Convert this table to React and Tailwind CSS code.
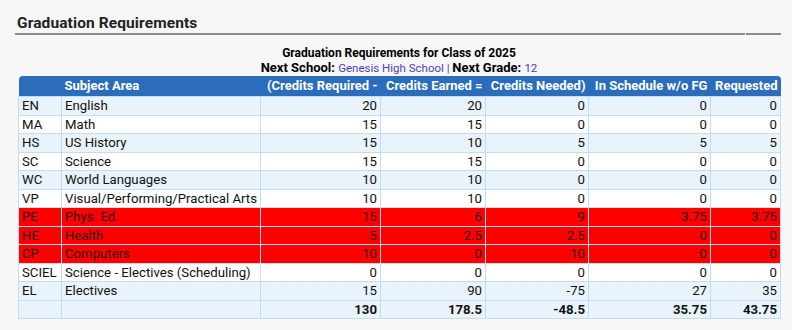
import React from 'react';

const rows = [
    { code: 'EN', name: 'English', req: '20', earned: '20', needed: '0', sched: '0', requested: '0' },
    { code: 'MA', name: 'Math', req: '15', earned: '15', needed: '0', sched: '0', requested: '0' },
    { code: 'HS', name: 'US History', req: '15', earned: '10', needed: '5', sched: '5', requested: '5' },
    { code: 'SC', name: 'Science', req: '15', earned: '15', needed: '0', sched: '0', requested: '0' },
    { code: 'WC', name: 'World Languages', req: '10', earned: '10', needed: '0', sched: '0', requested: '0' },
    { code: 'VP', name: 'Visual/Performing/Practical Arts', req: '10', earned: '10', needed: '0', sched: '0', requested: '0' },
    { code: 'PE', name: 'Phys. Ed.', req: '15', earned: '6', needed: '9', sched: '3.75', requested: '3.75', short: true },
    { code: 'HE', name: 'Health', req: '5', earned: '2.5', needed: '2.5', sched: '0', requested: '0', short: true },
    { code: 'CP', name: 'Computers', req: '10', earned: '0', needed: '10', sched: '0', requested: '0', short: true },
    { code: 'SCIEL', name: 'Science - Electives (Scheduling)', req: '0', earned: '0', needed: '0', sched: '0', requested: '0' },
    { code: 'EL', name: 'Electives', req: '15', earned: '90', needed: '-75', sched: '27', requested: '35' },
];

const cell = 'border border-[#c3dcf3] px-[3px] h-[18.5px] leading-none';

export default function App() {
    return (
        <div className="w-[792px] h-[330px] bg-[#f7f7f7] text-[#111] overflow-hidden" style={{ fontFamily: 'Roboto, "Liberation Sans", sans-serif' }}>
            <div className="pl-[15px] pt-[14px]">
                <h2 className="pl-[2px] text-[15.5px] font-bold text-[#222] leading-[18px] tracking-[0.1px]">Graduation Requirements</h2>
                <div className="flex mt-[1px]">
                    <div className="w-[730px] border-b-2 border-[#8c8c8c]" />
                    <div className="w-[35px] ml-px border-b-2 border-[#8c8c8c]" />
                </div>
            </div>

            <div className="ml-[18px] w-[762px] mt-[12px]">
                <div className="text-center leading-none">
                    <div className="text-[12px] font-bold text-black">Graduation Requirements for Class of 2025</div>
                    <div className="mt-[2px] text-[13px] text-black">
                        <span className="font-bold">Next School: </span>
                        <span className="text-[11.5px] text-[#4f3fb5]">Genesis High School</span>
                        <span className="text-[11.5px] text-[#4f3fb5]"> | </span>
                        <span className="font-bold">Next Grade: </span>
                        <span className="text-[11.5px] text-[#4f3fb5]">12</span>
                    </div>
                </div>

                <table className="mt-[1px] w-[762px] border-collapse table-fixed text-[13.2px]">
                    <colgroup>
                        <col className="w-[43px]" />
                        <col className="w-[199px]" />
                        <col className="w-[120px]" />
                        <col className="w-[105px]" />
                        <col className="w-[103px]" />
                        <col className="w-[122px]" />
                        <col className="w-[70px]" />
                    </colgroup>
                    <thead>
                        <tr className="bg-[#2c6dbb] text-white text-[13px] font-bold h-[21px]">
                            <th className="rounded-tl-[4px]"></th>
                            <th className="text-left px-[3px]">Subject Area</th>
                            <th className="text-right px-[3px] whitespace-nowrap">(Credits Required -</th>
                            <th className="text-right px-[3px] whitespace-nowrap">Credits Earned =</th>
                            <th className="text-right px-[3px] whitespace-nowrap">Credits Needed)</th>
                            <th className="text-right px-[3px] whitespace-nowrap">In Schedule w/o FG</th>
                            <th className="text-right px-[3px] whitespace-nowrap rounded-tr-[4px]">Requested</th>
                        </tr>
                    </thead>
                    <tbody>
                        {rows.map((r, i) => {
                            const bg = r.short ? 'bg-[#ff0000] text-[#300000]' : i % 2 === 0 ? 'bg-[#e9f3fb]' : 'bg-white';
                            return (
                                <tr key={r.code} className={bg}>
                                    <td className={cell}>{r.code}</td>
                                    <td className={`${cell} whitespace-nowrap`}>{r.name}</td>
                                    <td className={`${cell} text-right`}>{r.req}</td>
                                    <td className={`${cell} text-right`}>{r.earned}</td>
                                    <td className={`${cell} text-right`}>{r.needed}</td>
                                    <td className={`${cell} text-right`}>{r.sched}</td>
                                    <td className={`${cell} text-right`}>{r.requested}</td>
                                </tr>
                            );
                        })}
                        <tr className="bg-[#e9f3fb] font-bold">
                            <td className={cell}></td>
                            <td className={cell}></td>
                            <td className={`${cell} text-right`}>130</td>
                            <td className={`${cell} text-right`}>178.5</td>
                            <td className={`${cell} text-right`}>-48.5</td>
                            <td className={`${cell} text-right`}>35.75</td>
                            <td className={`${cell} text-right`}>43.75</td>
                        </tr>
                    </tbody>
                </table>
            </div>
        </div>
    );
}
